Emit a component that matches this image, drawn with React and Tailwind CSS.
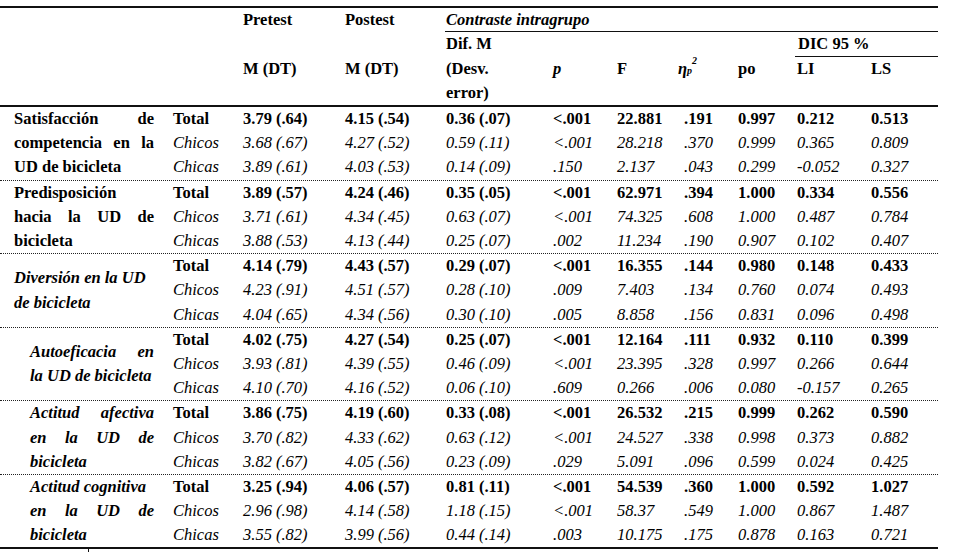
import React from "react";

const COLS =
  "grid grid-cols-[170px_70px_102px_101px_107px_64px_59px_62px_59px_74px_70px]";

const groups = [
  {
    label: [["Satisfacción", "de"], ["competencia", "en", "la"], "UD de bicicleta"],
    italic: false,
    indent: false,
    center: false,
    rows: [
      ["3.79 (.64)", "4.15 (.54)", "0.36 (.07)", "<.001", "22.881", ".191", "0.997", "0.212", "0.513"],
      ["3.68 (.67)", "4.27 (.52)", "0.59 (.11)", "<.001", "28.218", ".370", "0.999", "0.365", "0.809"],
      ["3.89 (.61)", "4.03 (.53)", "0.14 (.09)", ".150", "2.137", ".043", "0.299", "-0.052", "0.327"],
    ],
  },
  {
    label: ["Predisposición", ["hacia", "la", "UD", "de"], "bicicleta"],
    italic: false,
    indent: false,
    center: false,
    rows: [
      ["3.89 (.57)", "4.24 (.46)", "0.35 (.05)", "<.001", "62.971", ".394", "1.000", "0.334", "0.556"],
      ["3.71 (.61)", "4.34 (.45)", "0.63 (.07)", "<.001", "74.325", ".608", "1.000", "0.487", "0.784"],
      ["3.88 (.53)", "4.13 (.44)", "0.25 (.07)", ".002", "11.234", ".190", "0.907", "0.102", "0.407"],
    ],
  },
  {
    label: ["Diversión en la UD", "de bicicleta"],
    italic: true,
    indent: false,
    center: true,
    rows: [
      ["4.14 (.79)", "4.43 (.57)", "0.29 (.07)", "<.001", "16.355", ".144", "0.980", "0.148", "0.433"],
      ["4.23 (.91)", "4.51 (.57)", "0.28 (.10)", ".009", "7.403", ".134", "0.760", "0.074", "0.493"],
      ["4.04 (.65)", "4.34 (.56)", "0.30 (.10)", ".005", "8.858", ".156", "0.831", "0.096", "0.498"],
    ],
  },
  {
    label: [["Autoeficacia", "en"], "la UD de bicicleta"],
    italic: true,
    indent: true,
    center: true,
    rows: [
      ["4.02 (.75)", "4.27 (.54)", "0.25 (.07)", "<.001", "12.164", ".111", "0.932", "0.110", "0.399"],
      ["3.93 (.81)", "4.39 (.55)", "0.46 (.09)", "<.001", "23.395", ".328", "0.997", "0.266", "0.644"],
      ["4.10 (.70)", "4.16 (.52)", "0.06 (.10)", ".609", "0.266", ".006", "0.080", "-0.157", "0.265"],
    ],
  },
  {
    label: [["Actitud", "afectiva"], ["en", "la", "UD", "de"], "bicicleta"],
    italic: true,
    indent: true,
    center: false,
    rows: [
      ["3.86 (.75)", "4.19 (.60)", "0.33 (.08)", "<.001", "26.532", ".215", "0.999", "0.262", "0.590"],
      ["3.70 (.82)", "4.33 (.62)", "0.63 (.12)", "<.001", "24.527", ".338", "0.998", "0.373", "0.882"],
      ["3.82 (.67)", "4.05 (.56)", "0.23 (.09)", ".029", "5.091", ".096", "0.599", "0.024", "0.425"],
    ],
  },
  {
    label: ["Actitud cognitiva", ["en", "la", "UD", "de"], "bicicleta"],
    italic: true,
    indent: true,
    center: false,
    rows: [
      ["3.25 (.94)", "4.06 (.57)", "0.81 (.11)", "<.001", "54.539", ".360", "1.000", "0.592", "1.027"],
      ["2.96 (.98)", "4.14 (.58)", "1.18 (.15)", "<.001", "58.37", ".549", "1.000", "0.867", "1.487"],
      ["3.55 (.82)", "3.99 (.56)", "0.44 (.14)", ".003", "10.175", ".175", "0.878", "0.163", "0.721"],
    ],
  },
];

const subs = ["Total", "Chicos", "Chicas"];

function LabelLine({ line }) {
  if (Array.isArray(line)) {
    return (
      <div className="h-[24.2px] flex items-center justify-between whitespace-nowrap">
        {line.map((w, i) => (
          <span key={i}>{w}</span>
        ))}
      </div>
    );
  }
  return <div className="h-[24.2px] flex items-center whitespace-nowrap">{line}</div>;
}

function Eta() {
  return (
    <span className="italic relative inline-block pr-[14px]">
      <span>η</span>
      <span className="absolute left-[9px] top-[9px] text-[10px] leading-none">p</span>
      <span className="absolute left-[14px] -top-[1px] text-[10px] leading-none">2</span>
    </span>
  );
}

export default function App() {
  return (
    <div className="[font-family:'Liberation_Serif',serif] w-[953px] h-[552px] bg-white text-black overflow-hidden pt-[6px] text-[16.5px] leading-[24px]">
      <div className="w-[938px]">
        <div className="h-[2px] bg-[#111]" />
        <div className={`${COLS} grid-rows-[24.25px_24.25px_24.25px_24.25px] font-bold`}>
          <div className="col-start-3 row-start-1 pl-[3px] flex items-center">Pretest</div>
          <div className="col-start-4 row-start-1 pl-[3px] flex items-center">Postest</div>
          <div className="col-start-5 col-span-7 row-start-1 ml-[2px] pl-[1px] flex items-center italic border-b-[1.5px] border-[#111]">
            Contraste intragrupo
          </div>
          <div className="col-start-5 row-start-2 pl-[3px] flex items-center">Dif. M</div>
          <div className="col-start-10 col-span-2 row-start-2 ml-[1px] pl-[3px] flex items-center border-b-[1.5px] border-[#111]">
            DIC 95 %
          </div>
          <div className="col-start-3 row-start-3 pl-[3px] flex items-center">M (DT)</div>
          <div className="col-start-4 row-start-3 pl-[3px] flex items-center">M (DT)</div>
          <div className="col-start-5 row-start-3 pl-[3px] flex items-center">(Desv.</div>
          <div className="col-start-6 row-start-3 pl-[3px] flex items-center italic">p</div>
          <div className="col-start-7 row-start-3 pl-[3px] flex items-center">F</div>
          <div className="col-start-8 row-start-3 pl-[5px] flex items-center">
            <Eta />
          </div>
          <div className="col-start-9 row-start-3 pl-[3px] flex items-center">po</div>
          <div className="col-start-10 row-start-3 pl-[3px] flex items-center">LI</div>
          <div className="col-start-11 row-start-3 pl-[3px] flex items-center">LS</div>
          <div className="col-start-5 row-start-4 pl-[3px] flex items-center">error)</div>
        </div>
        <div className="h-[2px] bg-[#111]" />
        {groups.map((g, gi) => (
          <div
            key={gi}
            className={`${COLS} ${gi < groups.length - 1 ? "border-b border-dotted border-[#222]" : ""}`}
          >
            <div
              className={`row-span-3 flex flex-col font-bold ${g.italic ? "italic" : ""} ${
                g.indent ? "pl-[30px]" : "pl-[14px]"
              } pr-[16px] ${g.center ? "justify-center" : "justify-start"}`}
            >
              {g.label.map((l, li) => (
                <LabelLine key={li} line={l} />
              ))}
            </div>
            {g.rows.map((r, ri) => (
              <React.Fragment key={ri}>
                <div
                  className={`h-[24.2px] pl-[3px] flex items-center whitespace-nowrap ${
                    ri === 0 ? "font-bold" : "italic"
                  }`}
                >
                  {subs[ri]}
                </div>
                {r.map((v, vi) => (
                  <div
                    key={vi}
                    className={`h-[24.2px] ${vi === 5 ? "pl-[11px]" : "pl-[3px]"} flex items-center whitespace-nowrap ${
                      ri === 0 ? "font-bold" : "italic"
                    }`}
                  >
                    {v}
                  </div>
                ))}
              </React.Fragment>
            ))}
          </div>
        ))}
        <div className="h-[2px] bg-[#111]" />
        <div className="ml-[88px] w-px h-[4px] bg-[#111]" />
      </div>
    </div>
  );
}
